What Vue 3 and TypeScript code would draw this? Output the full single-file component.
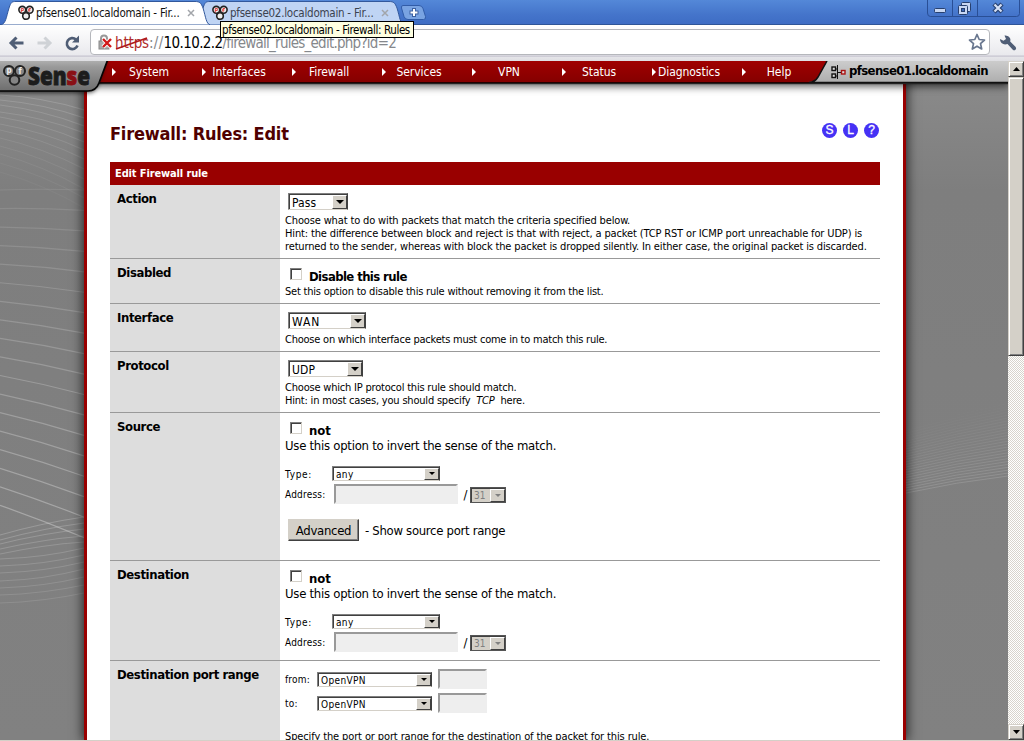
<script setup lang="ts">
const menu: string[] = ['System', 'Interfaces', 'Firewall', 'Services', 'VPN', 'Status', 'Diagnostics', 'Help']
const helpIcons: string[] = ['S', 'L', '?']
const tabs = [
  { title: 'pfsense01.localdomain - Fir...', active: true },
  { title: 'pfsense02.localdomain - Fir...', active: false },
]
const endpoints = [
  { label: 'Source', advanced: true },
  { label: 'Destination', advanced: false },
]
const portRows: string[] = ['from:', 'to:']

interface Curve { d: string; o: number }
const curves: Curve[] = []
const fanA = [[15, 22], [20, 30], [25, 38], [32, 45], [37, 54], [44, 62], [50, 71], [58, 81], [66, 91], [74, 101], [83, 110], [92, 120]]
fanA.forEach(([l, r], i) => curves.push({ d: `M0 ${l}Q45 ${(l + r) / 2 - 1} 84 ${r + 8}`, o: 0.16 - i * 0.011 }))
for (let i = 0; i < 18; i++) {
  const l = 110 + i * 18.55
  const r = 110 + i * 20.45
  curves.push({ d: `M0 ${l}Q42 ${(l + r) / 2 - 1.5} 84 ${r}`, o: 0.09 + i * 0.013 })
}
const fanC = [[455, 437], [460, 443], [464, 449], [469, 456], [474, 462], [479, 468], [486, 475], [493, 482], [501, 489], [508, 497], [515, 505], [523, 513]]
fanC.forEach(([l, r], i) => curves.push({ d: `M0 ${l}Q42 ${i < 5 ? (l + r) / 2 - 3 : l - 1} 84 ${r}`, o: 0.2 - i * 0.008 }))

const ripples: Curve[] = Array.from({ length: 26 }, (_, i) => ({
  d: `M0 ${413 - i * 2.6}Q50 ${402 - i * 2.7} 102 ${396 - i * 2.9}`,
  o: 0.14 - i * 0.0053,
}))
</script>

<template>
  <div class="window">
    <header class="titlebar">
      <div class="tabs">
        <div v-for="t in tabs" :key="t.title" class="tab" :class="{ active: t.active }">
          <svg class="tab-shape" width="212" height="25" viewBox="0 0 212 25">
            <path d="M0 25C5 23 5 18 8 8C10 2 11 1.5 15 1.5H194C199 1.5 200 3 202 8C205 18 205 23 209 25Z" />
          </svg>
          <svg class="favicon" width="16" height="16" viewBox="0 0 16 16">
            <g fill="#eee" stroke="#222" stroke-width="1.6">
              <circle cx="4.3" cy="4.8" r="3.4" /><circle cx="11.7" cy="4.8" r="3.4" /><circle cx="8" cy="11" r="3.3" />
            </g>
            <path d="M3.3 3.5v4M3.3 3.5h2v2h-2M11 7V3.5h2M10 5h2.5" stroke="#d22" stroke-opacity=".8" fill="none" />
          </svg>
          <span class="tab-title">{{ t.title }}</span>
          <svg class="tab-close" width="8" height="8" viewBox="0 0 8 8"><path d="M1 1l6 6M7 1l-6 6" stroke="#a2a5aa" stroke-width="1.5" /></svg>
        </div>
        <svg class="new-tab" width="28" height="18" viewBox="0 0 28 18">
          <path d="M3 1.500h16q3 0 4 3l2.500 8q.6 3-2 3H8q-3 0-4-3L1.500 4Q1 1.500 3 1.500Z" fill="#79a3e2" stroke="#315ca8" />
          <path d="M14 4v9M9.500 8.500h9" stroke="#3c61a1" stroke-width="4" /><path d="M14 5v7M10.500 8.500h7" stroke="#fff" stroke-width="2" />
        </svg>
      </div>
      <div class="controls">
        <svg width="93" height="17" viewBox="0 0 93 17">
          <path d="M.5 0v13q0 3.500 3 3.500h86q3 0 3-3V0M25.500 0v16M50.500 0v16" fill="none" stroke="#294f96" />
          <rect x="7.500" y="8.500" width="11" height="4" rx="1" fill="#c8d7f3" stroke="#27406f" />
          <g fill="#c8d7f3" stroke="#27406f"><rect x="34.500" y="2.500" width="9" height="9" rx="1" /><rect x="31.500" y="5.500" width="9" height="9" rx="1" /><rect x="34.500" y="8.500" width="3" height="3" fill="#3c68bb" /></g>
          <path d="M67 4l8 8M75 4l-8 8" stroke="#27406f" stroke-width="4.500" /><path d="M67.500 4.500l7 7M74.500 4.500l-7 7" stroke="#d4e0f6" stroke-width="2.200" />
        </svg>
      </div>
    </header>

    <div class="toolbar">
      <svg class="nav" width="90" height="30" viewBox="0 0 90 30">
        <g fill="none" stroke-width="3">
          <path d="M23.500 15H11M16.500 9.500L11 15l5.500 5.500" stroke="#4f5d75" />
          <path d="M37.500 15H50M44.500 9.500L50 15l-5.500 5.500" stroke="#cfd2d6" />
          <path d="M76 11.500A5.500 5.500 0 1 0 77.500 17.500" stroke="#4f5d75" stroke-width="2.600" />
        </g>
        <path d="M79 7.500v7h-7z" fill="#4f5d75" />
      </svg>
      <div class="omnibox">
        <svg class="lock" width="15" height="16" viewBox="0 0 15 16">
          <path d="M3 8V4.500q0-3 3-3t3 3V8" fill="none" stroke="#999" stroke-width="2" />
          <rect x="1" y="7" width="10" height="8" fill="#aaa" stroke="#888" />
          <path d="M5 5l8 8M13 5l-8 8" stroke="#fff" stroke-width="4" /><path d="M5 5l8 8M13 5l-8 8" stroke="#d01818" stroke-width="2.400" />
        </svg>
        <span class="url"><span class="scheme">https<svg class="strike" width="34" height="15" viewBox="0 0 34 15"><path d="M1 13L32 2" stroke="#b01a1a" stroke-width="1.800" /></svg></span><span class="sep">://</span><span class="host">10.10.2.2</span>/firewall_rules_edit.php?id=2</span>
        <svg class="star" width="18" height="18" viewBox="0 0 18 18"><path d="M9 1.500l2.200 5 5.300.5-4 3.600 1.200 5.400L9 13.200 4.300 16l1.200-5.400-4-3.600 5.300-.5z" fill="#fff" stroke="#69778f" stroke-width="1.700" stroke-linejoin="round" /></svg>
      </div>
      <svg class="wrench" width="18" height="18" viewBox="0 0 18 18"><path d="M5.500 1.500Q9.500 1 11 4q.8 1.800.2 3.500l5.500 5.500q1 1.500-.2 2.700-1.300 1-2.700 0L8.500 10Q5 11.200 2.500 9 .8 7.200 1 5l3.500 1.800L7 5z" fill="#4f5d75" /></svg>
    </div>
    <div class="tooltip">pfsense02.localdomain - Firewall: Rules</div>

    <div class="viewport">
      <div class="page">
        <svg class="side left" width="84" height="660" viewBox="0 0 84 660">
          <path v-for="(c, i) in curves" :key="i" :d="c.d" :stroke-opacity="c.o" fill="none" stroke="#fff" stroke-width="1.2" />
        </svg>
        <svg class="side right" width="102" height="660" viewBox="0 0 102 660">
          <path v-for="(c, i) in ripples" :key="i" :d="c.d" :stroke-opacity="c.o" fill="none" stroke="#fff" />
        </svg>
        <main class="sheet">
          <div class="heading">
            <h1>Firewall: Rules: Edit</h1>
            <div class="help"><i v-for="h in helpIcons" :key="h">{{ h }}</i></div>
          </div>
          <div class="bar">Edit Firewall rule</div>

          <section class="row r-action">
            <div class="label">Action</div>
            <div class="field">
              <div class="select w60"><span>Pass</span><b></b></div>
              <p>Choose what to do with packets that match the criteria specified below.<br>Hint: the difference between block and reject is that with reject, a packet (TCP RST or ICMP port unreachable for UDP) is<br>returned to the sender, whereas with block the packet is dropped silently. In either case, the original packet is discarded.</p>
            </div>
          </section>
          <section class="row r-disabled">
            <div class="label">Disabled</div>
            <div class="field">
              <div class="check"><u></u><strong>Disable this rule</strong></div>
              <p class="tight">Set this option to disable this rule without removing it from the list.</p>
            </div>
          </section>
          <section class="row r-interface">
            <div class="label">Interface</div>
            <div class="field">
              <div class="select w78"><span>WAN</span><b></b></div>
              <p>Choose on which interface packets must come in to match this rule.</p>
            </div>
          </section>
          <section class="row r-protocol">
            <div class="label">Protocol</div>
            <div class="field">
              <div class="select w75"><span>UDP</span><b></b></div>
              <p>Choose which IP protocol this rule should match.<br>Hint: in most cases, you should specify &nbsp;<em>TCP</em>&nbsp; here.</p>
            </div>
          </section>
          <section v-for="e in endpoints" :key="e.label" class="row" :class="e.advanced ? 'r-source' : 'r-dest'">
            <div class="label">{{ e.label }}</div>
            <div class="field">
              <div class="check"><u></u><strong class="not">not</strong></div>
              <div class="invert">Use this option to invert the sense of the match.</div>
              <div class="line type"><span class="cap">Type:</span><div class="select small w108"><span>any</span><b></b></div></div>
              <div class="line addr"><span class="cap">Address:</span><div class="input w124"></div><span class="slash">/</span><div class="select small off w36"><span>31</span><b></b></div></div>
              <div v-if="e.advanced" class="adv"><button>Advanced</button><span>- Show source port range</span></div>
            </div>
          </section>
          <section class="row r-ports">
            <div class="label">Destination port range</div>
            <div class="field">
              <div v-for="p in portRows" :key="p" class="line port"><span class="cap">{{ p }}</span><div class="select small w115"><span>OpenVPN</span><b></b></div><div class="input w49"></div></div>
              <p class="spec">Specify the port or port range for the destination of the packet for this rule.</p>
            </div>
          </section>
        </main>
        <nav class="menubar">
          <div v-for="m in menu" :key="m" class="item"><svg width="4" height="8" viewBox="0 0 4 8"><path d="M0 0l4 4-4 4z" fill="#fff" /></svg><span>{{ m }}</span></div>
        </nav>
        <svg class="brand" width="114" height="40" viewBox="0 0 114 40">
          <defs>
            <linearGradient id="steel" x1="0" y1="0" x2="0" y2="1"><stop offset="0" stop-color="#b4b4b4" /><stop offset=".25" stop-color="#999" /><stop offset="1" stop-color="#6e6e6e" /></linearGradient>
            <filter id="soft" x="-10%" y="-20%" width="120%" height="150%"><feGaussianBlur stdDeviation="2" /></filter>
          </defs>
          <path d="M-5 0H107L99 22Q96 32 88 32H-5Z" fill="#000" opacity=".6" filter="url(#soft)" />
          <path d="M-5-2H108L99 22Q96 30 88 30H-5Z" fill="url(#steel)" stroke="#050505" stroke-width="1.700" />
          <g fill="#858585" stroke="#222" stroke-width="2"><circle cx="9" cy="10" r="5" /><circle cx="20" cy="10" r="5" /><circle cx="14.500" cy="19" r="4.800" /></g>
          <text x="6.500" y="12" class="mark">p</text><text x="18.500" y="13" class="mark">f</text>
          <text x="28" y="23.500" class="word" textLength="62" lengthAdjust="spacingAndGlyphs">Sen<tspan fill="#8a1015" stroke="#8a1015">s</tspan>e</text>
        </svg>
        <div class="hostname">
          <svg class="host-shape" width="200" height="22" viewBox="0 0 200 22"><defs><linearGradient id="silver" x1="0" y1="0" x2="0" y2="1"><stop offset="0" stop-color="#ccc" /><stop offset="1" stop-color="#aeaeae" /></linearGradient></defs><path d="M19 0H200V21H0Q7 21 10 16Z" fill="url(#silver)" /><path d="M19 0L10 16Q7 21 1 21.500H200" fill="none" stroke="#111" stroke-width="1.500" /></svg>
          <svg class="net" width="15" height="16" viewBox="0 0 15 16"><path d="M6.500 1v5M6.500 10v5M4 5h2.500M4 12h2.500M6.500 5v7M6.500 8.500H10" stroke="#111" fill="none" /><g fill="#ddd" stroke="#111" stroke-width="1.400"><rect x="1" y="3" width="3.500" height="3.500" /><rect x="1" y="10" width="3.500" height="3.500" /><rect x="10.500" y="6.500" width="3.500" height="3.500" stroke="#a11" /></g></svg>
          <span>pfsense01.localdomain</span>
        </div>
      </div>
      <div class="scroll">
        <div class="sb"><svg width="7" height="4" viewBox="0 0 7 4"><path d="M0 4L3.500 0 7 4z" /></svg></div>
        <div class="thumb"></div>
        <div class="track"></div>
        <div class="sb"><svg width="7" height="4" viewBox="0 0 7 4"><path d="M0 0h7L3.500 4z" /></svg></div>
      </div>
    </div>
  </div>
</template>

<style>
body { margin: 0; overflow: hidden; }
</style>
<style scoped>
* { box-sizing: border-box; }
.window { position: relative; width: 1024px; height: 741px; overflow: hidden; font-family: "DejaVu Sans Condensed", "DejaVu Sans", sans-serif; font-stretch: condensed; color: #000; background: #fff; border-bottom: 1px solid #d4d0c8; white-space: nowrap; }
.titlebar { display: flex; justify-content: space-between; height: 25px; background: linear-gradient(#5488d8, #4474ca 60%, #3e6cc4); box-shadow: inset 0 -1px #2f5598; }
.tabs { display: flex; padding-left: 1px; }
.tab { position: relative; display: flex; align-items: center; width: 194px; height: 25px; padding-left: 17px; z-index: 1; color: #3c4350; }
.tab.active { z-index: 2; color: #111; }
.tab-shape { position: absolute; left: 0; top: 0; z-index: -1; fill: #bfd4f4; stroke: #32589c; }
.active .tab-shape { fill: #fff; }
.favicon { margin-top: 1px; }
.tab-title { width: 147px; margin-left: 2px; font-size: 11.500px; letter-spacing: -0.25px; margin-top: 1px; }
.tab-close { margin-left: 4px; }
.new-tab { margin: 4px 0 0 11px; }
.controls { padding-right: 4px; height: 17px; }
.toolbar { display: flex; height: 36px; background: linear-gradient(#fff, #e9e9ed 84%, #b8b5c4 86%, #e5e5e9 89%, #dedee2); }
.nav { margin-top: 3px; flex: none; }
.omnibox { display: flex; align-items: center; width: 900px; height: 26px; margin-top: 4px; padding-left: 7px; border: 1px solid #b5b7bc; border-radius: 4px; background: #fff; }
.star { margin-left: -3px; flex: none; }
.url { flex: none; margin-left: 2px; width: 856px; font-size: 15px; color: #85888c; letter-spacing: -0.75px; margin-top: 1px; }
.scheme { position: relative; color: #b02a2a; letter-spacing: -0.15px; }
.sep { letter-spacing: 0.3px; }
.strike { position: absolute; left: 0; top: 2px; }
.host { color: #000; letter-spacing: -0.6px; }
.wrench { margin: 9px 0 0 9px; }
.tooltip { position: absolute; z-index: 9; left: 220px; top: 21px; width: 194px; height: 17px; border: 1px solid #000; background: #ffffe1; font-size: 11.500px; line-height: 16px; padding-left: 1px; letter-spacing: -0.4px; }
.viewport { display: flex; height: 679px; }
.page { position: relative; width: 1008px; height: 679px; overflow: hidden; background: linear-gradient(#8c8c8c, #7e7e7e 130px, #818181); }
.side { position: absolute; top: 19px; left: 0; }
.right { left: 906px; }
.sheet { position: relative; margin-left: 84px; width: 822px; height: 679px; padding: 0 23px; border: solid #900; border-width: 0 3px; background: #fff; box-shadow: 0 0 11px 1px rgba(0,0,0,.75); }
.heading { display: flex; justify-content: space-between; height: 101px; }
h1 { margin: 60px 0 0; color: #500000; font-size: 18px; line-height: 26px; font-weight: bold; letter-spacing: -0.2px; }
.help { display: flex; gap: 6px; margin: 62px 1px 0 0; }
.help i { width: 15px; height: 15px; border-radius: 50%; background: #4531f5; color: #fff; font: 12px/15px "Liberation Sans", sans-serif; text-align: center; -webkit-text-stroke: 0.3px #fff; }
.bar { height: 23px; padding-left: 5px; background: #900; color: #fff; font-size: 11px; font-weight: bold; line-height: 24px; letter-spacing: -0.13px; }
.row { display: flex; width: 770px; border-bottom: 1px solid #999; }
.label { flex: none; width: 170px; padding: 5px 7px; background: #ddd; font-size: 13px; font-weight: bold; line-height: 18px; letter-spacing: -0.4px; }
.field { flex: 1; padding-left: 5px; overflow: hidden; }
.r-action { height: 74px; } .r-disabled { height: 45px; } .r-interface { height: 48px; } .r-protocol { height: 61px; } .r-source { height: 148px; } .r-dest { height: 100px; } .r-ports { height: 140px; }
p { margin: 4px 0 0; font-size: 11px; line-height: 13px; letter-spacing: -0.145px; }
.r-disabled p { letter-spacing: -0.21px; }
.r-interface p { letter-spacing: -0.23px; }
.r-protocol p { letter-spacing: -0.2px; }
.select { display: flex; justify-content: space-between; height: 17px; margin: 8px 0 0 3px; border: 1px solid; border-color: #808080 #404040 #d4d0c8 #808080; box-shadow: inset 1px 1px #404040; background: #fff; font-size: 12px; line-height: 18px; padding-left: 3px; letter-spacing: 0.1px; }
.w78 { letter-spacing: 0.9px; }
.select b { width: 15px; margin: 1px 0 0; border: 1px solid; border-color: #fff #404040 #404040 #fff; background: #d4d0c8; display: grid; place-items: center; }
.select b::after { content: ""; border: 4px solid transparent; border-top-color: #000; border-bottom: 0; }
.small { height: 15px; margin: 0; font-size: 10px; line-height: 16px; letter-spacing: 0.35px; }
.small b::after { border-width: 3px; border-bottom: 0; }
.off { background: #d4d0c8; color: #808080; height: 16px; margin-top: 1px; border-color: #555; letter-spacing: 0; }
.off b::after { border-top-color: #808080; }
.w60 { width: 60px; } .w78 { width: 78px; } .w75 { width: 75px; } .w108 { width: 108px; } .w36 { width: 36px; } .w115 { width: 115px; } .w124 { width: 124px; } .w49 { width: 49px; }
.check { display: flex; height: 26px; padding: 9px 0 0 5px; font-size: 13px; line-height: 17px; letter-spacing: -0.6px; }
.check .not { letter-spacing: 0; }
.check u { width: 12px; height: 12px; margin-right: 7px; border: 1px solid; border-color: #808080 #d4d0c8 #d4d0c8 #808080; box-shadow: inset 1px 1px #404040; }
.tight { margin-top: 0; }
.invert { height: 13px; font-size: 13px; line-height: 14px; letter-spacing: -0.26px; }
.line { display: flex; align-items: center; font-size: 10px; }
.cap { width: 47px; letter-spacing: 0.2px; }
.type { height: 16px; margin-top: 13px; }
.type .cap { letter-spacing: 0.7px; padding-top: 2px; }
.addr { height: 20px; margin-top: 3px; }
.addr .cap { width: 49px; padding-top: 1px; }
.input { height: 20px; border: 2px solid; border-color: #999 #eee #eee #999; background: #eee; }
.slash { width: 12px; text-align: center; padding-left: 3px; font-size: 13px; }
.adv { display: flex; align-items: center; height: 22px; margin: 15px 0 0 3px; font-size: 13px; letter-spacing: -0.3px; }
button { width: 71px; height: 22px; margin-right: 6px; padding: 0; border: 1px solid; border-color: #d4d0c8 #404040 #404040 #d4d0c8; box-shadow: inset -1px -1px #808080; background: #d4d0c8; font: inherit; letter-spacing: inherit; }
.port { height: 20px; margin-top: 4px; }
.port:first-child { margin-top: 8px; }
.port .cap { width: 32px; }
.port .input { margin-left: 6px; }
.spec { margin-top: 17px; letter-spacing: -0.12px; }
.menubar { position: absolute; left: 0; top: 0; display: flex; width: 1008px; height: 21px; padding-left: 104px; background: linear-gradient(#a00000, #850000); box-shadow: 0 1px #200, 0 2px 1px #222, 0 3px 8px 1px rgba(0,0,0,.7); }
.item { display: grid; width: 90px; align-items: center; color: #fff; font-size: 12px; letter-spacing: -0.05px; }
.item svg, .item span { grid-area: 1 / 1; }
.item svg { margin-left: 8px; }
.item span { justify-self: center; }
.brand { position: absolute; left: 0; top: 0; }
.mark { font-size: 8px; fill: #eee; font-weight: bold; }
.word { font: 800 25px "Open Sans", sans-serif; fill: #1c1c1c; stroke: #1c1c1c; stroke-width: 0.900px; }
.hostname { position: absolute; left: 808px; top: 0; display: flex; align-items: center; width: 200px; height: 21px; padding-left: 23px; font-size: 13px; font-weight: bold; letter-spacing: -0.62px; }
.host-shape { position: absolute; left: 0; top: 0; }
.net, .hostname span { position: relative; }
.hostname span { top: -1px; }
.net { margin-right: 3px; }
.scroll { display: flex; flex-direction: column; width: 16px; height: 679px; }
.sb, .thumb { border: 1px solid; border-color: #d4d0c8 #404040 #404040 #d4d0c8; box-shadow: inset 1px 1px #fff, inset -1px -1px #808080; background: #d4d0c8; }
.sb { display: grid; place-items: center; height: 16px; flex: none; }
.thumb { height: 279px; }
.track { flex: 1; background: repeating-conic-gradient(#fff 0 25%, #d8d4cc 0 50%) 0 0 / 2px 2px; }
</style>
